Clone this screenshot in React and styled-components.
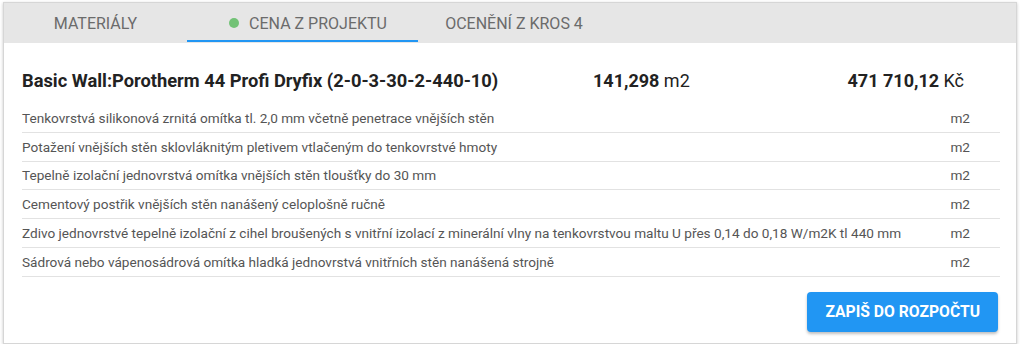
import React from "react";
import styled, { createGlobalStyle } from "styled-components";

const GlobalStyle = createGlobalStyle`
	body {
		margin: 0;
		background: #fff;
		font-family: Roboto, "Liberation Sans", Arial, sans-serif;
	}
`;

const Page = styled.div`
	padding: 2px 0 0 3px;
`;

const Card = styled.div`
	width: 1012px;
	border: 1px solid #d6d6d6;
	background: #fff;
	box-shadow: 0 1px 3px rgba(0, 0, 0, 0.22);
`;

const TabBar = styled.div`
	display: flex;
	height: 40px;
	background: #e6e6e6;
`;

const Tab = styled.div`
	position: relative;
	display: flex;
	align-items: center;
	justify-content: center;
	gap: 10px;
	box-sizing: border-box;
	width: ${(p) => p.$width}px;
	padding-left: ${(p) => p.$shift || 0}px;
	font-size: 16px;
	color: #6b6b6b;
	text-transform: uppercase;

	&::after {
		content: "";
		display: ${(p) => (p.$active ? "block" : "none")};
		position: absolute;
		left: 0;
		right: 0;
		bottom: 1px;
		height: 2px;
		background: #2196f3;
	}
`;

const Dot = styled.span`
	width: 10px;
	height: 10px;
	border-radius: 50%;
	background: #72c276;
`;

const Body = styled.div`
	padding: 0 16px 0 18px;
`;

const Header = styled.div`
	display: grid;
	grid-template-columns: 571px 1fr auto;
	align-items: center;
	box-sizing: border-box;
	height: 61px;
	padding: 14px 36px 0 0;
	font-size: 18px;
	color: #222;
`;

const Title = styled.div`
	font-size: 18.3px;
	font-weight: 700;
`;

const Strong = styled.span`
	font-weight: 700;
`;

const Row = styled.div`
	display: grid;
	grid-template-columns: 1fr auto;
	align-items: center;
	height: 27.8px;
	padding-right: 30px;
	border-bottom: 1px solid #e2e2e2;
	font-size: 13.6px;
	color: #555;
`;

const Footer = styled.div`
	display: flex;
	justify-content: flex-end;
	padding: 15px 2px 11px 0;
`;

const Button = styled.button`
	height: 40px;
	padding: 0 18px;
	border: none;
	border-radius: 4px;
	background: #2196f3;
	color: #fff;
	font-family: inherit;
	font-size: 15.7px;
	font-weight: 700;
	box-shadow: 0 2px 3px rgba(0, 0, 0, 0.25);
	cursor: pointer;
`;

const items = [
	"Tenkovrstvá silikonová zrnitá omítka tl. 2,0 mm včetně penetrace vnějších stěn",
	"Potažení vnějších stěn sklovláknitým pletivem vtlačeným do tenkovrstvé hmoty",
	"Tepelně izolační jednovrstvá omítka vnějších stěn tloušťky do 30 mm",
	"Cementový postřik vnějších stěn nanášený celoplošně ručně",
	"Zdivo jednovrstvé tepelně izolační z cihel broušených s vnitřní izolací z minerální vlny na tenkovrstvou maltu U přes 0,14 do 0,18 W/m2K tl 440 mm",
	"Sádrová nebo vápenosádrová omítka hladká jednovrstvá vnitřních stěn nanášená strojně",
];

export default function App() {
	return (
		<Page>
			<GlobalStyle />
			<Card>
				<TabBar>
					<Tab $width={183}>Materiály</Tab>
					<Tab $width={231} $shift={11} $active>
						<Dot />
						Cena z projektu
					</Tab>
					<Tab $width={192}>Ocenění z KROS 4</Tab>
				</TabBar>
				<Body>
					<Header>
						<Title>Basic Wall:Porotherm 44 Profi Dryfix (2-0-3-30-2-440-10)</Title>
						<div>
							<Strong>141,298</Strong> m2
						</div>
						<div>
							<Strong>471 710,12</Strong> Kč
						</div>
					</Header>
					{items.map((text) => (
						<Row key={text}>
							<span>{text}</span>
							<span>m2</span>
						</Row>
					))}
					<Footer>
						<Button>ZAPIŠ DO ROZPOČTU</Button>
					</Footer>
				</Body>
			</Card>
		</Page>
	);
}
